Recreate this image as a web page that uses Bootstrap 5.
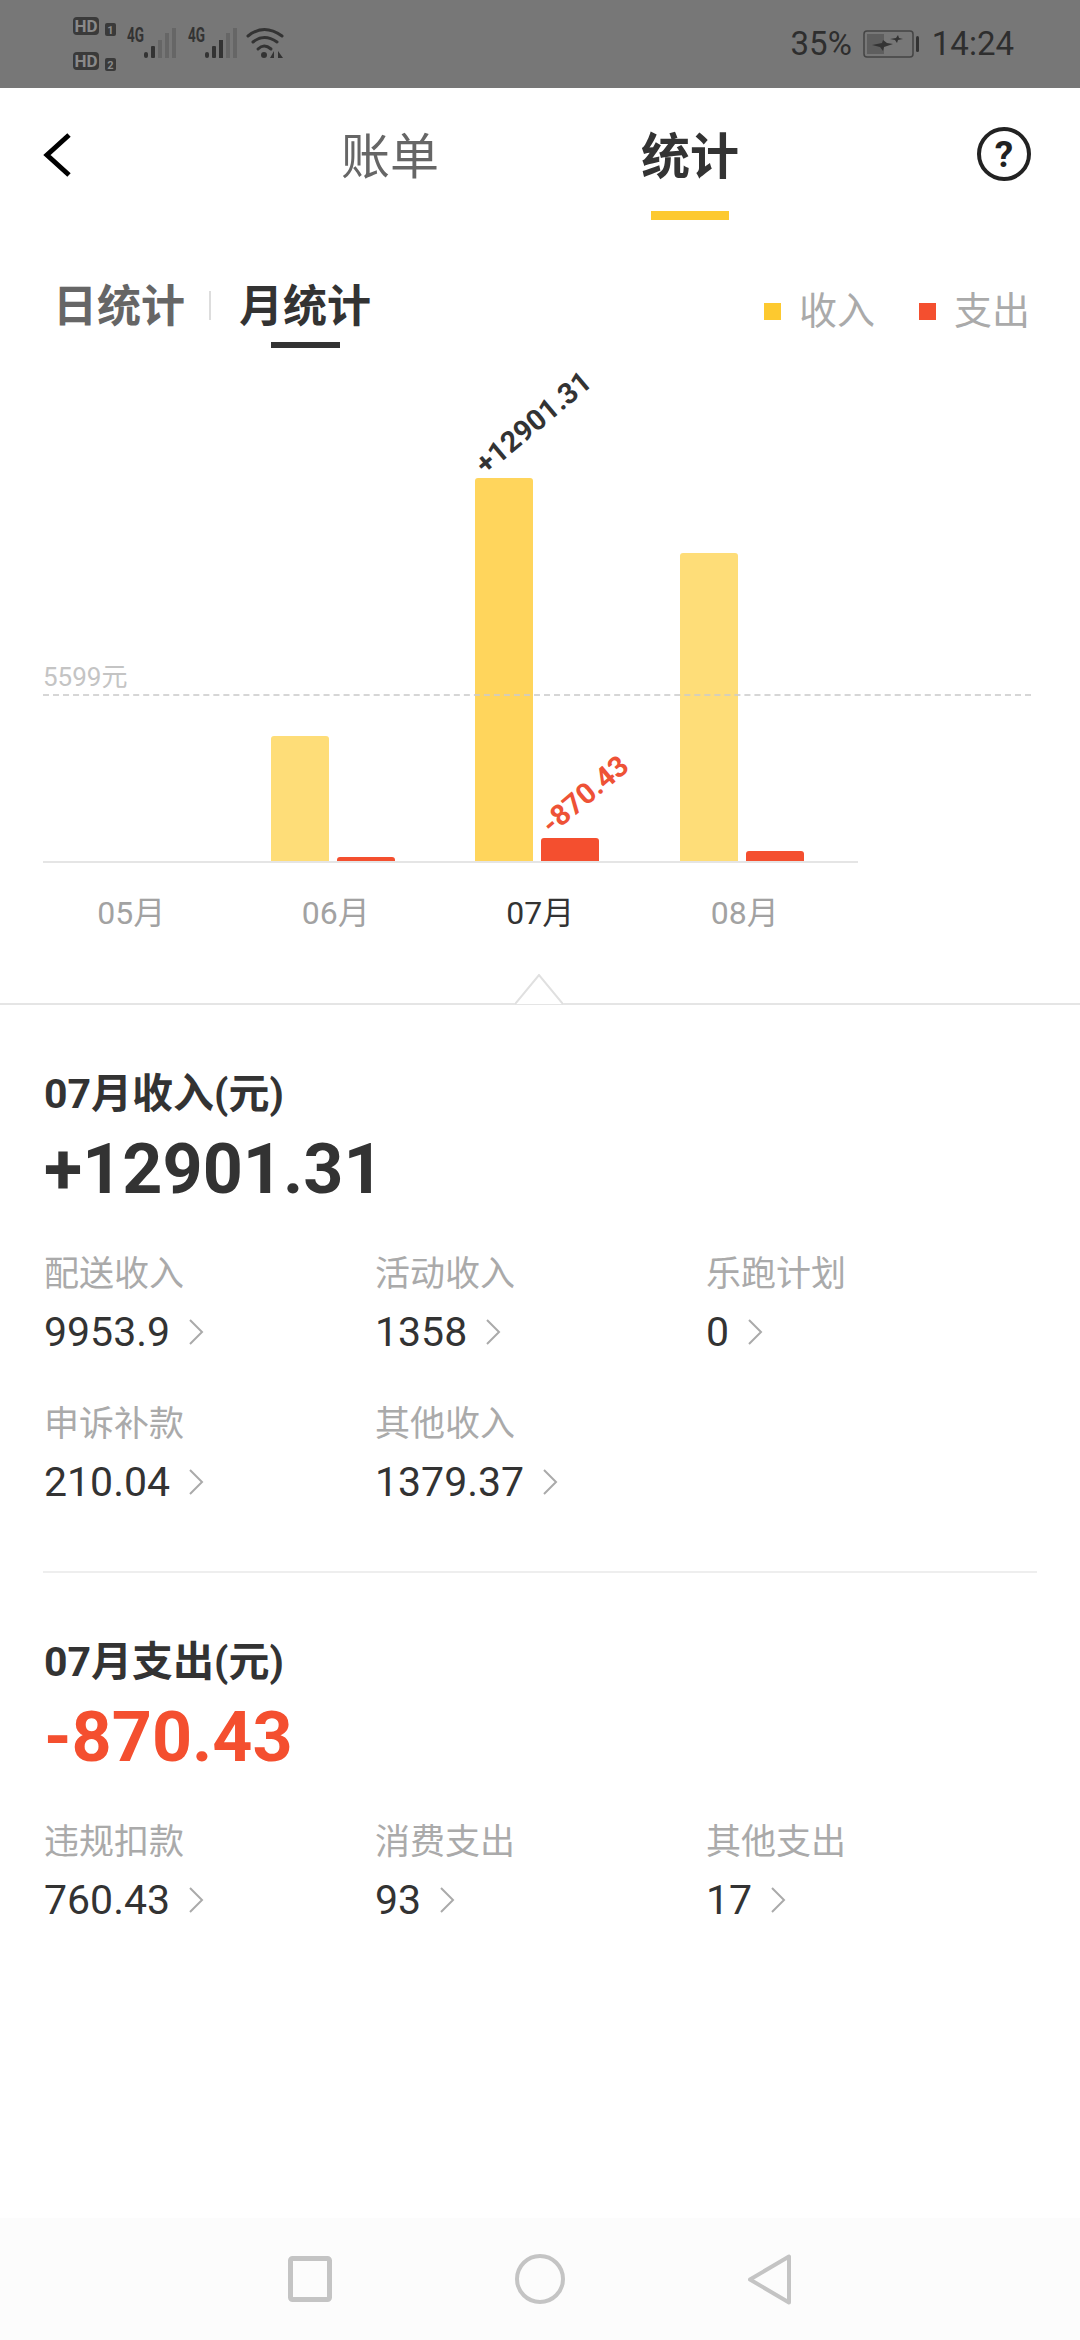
<!DOCTYPE html>
<html lang="zh">
<head>
    <meta charset="UTF-8">
    <meta name="viewport" content="width=device-width, initial-scale=1.0">
    <title>统计</title>
    <link href="https://cdn.jsdelivr.net/npm/bootstrap@5.3.2/dist/css/bootstrap.min.css" rel="stylesheet">
    <style>
        body { font-family: Roboto, "Noto Sans CJK SC", sans-serif; color: #333; background: #fff; }
        .app-page { width: 1080px; height: 2340px; overflow: hidden; }
        .status-strip { height: 88px; background: #777; padding: 0 66px 0 72px; }
        .status-text { font-size: 33px; line-height: 40px; color: #2e2e2e; }
        .status-batt { margin: 0 13px 0 11px; }

        .top-head { height: 132px; padding: 40px 49px 0 43px; }
        .head-left { width: 106px; height: 60px; margin-top: -3px; }
        .head-right { width: 100px; height: 60px; margin-top: -4px; }
        .main-tab { font-size: 49px; line-height: 60px; width: 98px; white-space: nowrap; color: #666; }
        .main-tab.is-on { color: #333; font-weight: 700; }
        .main-tab-bar { width: 78px; height: 9px; margin-top: 23px; background: transparent; }
        .is-on .main-tab-bar { background: #fdc92f; }
        .main-tabs { gap: 202px; }

        .sub-head { height: 128px; padding: 59px 50px 0 53px; }
        .sub-tab { font-size: 44px; line-height: 56px; font-weight: 700; color: #666; }
        .sub-tab.is-on { color: #333; }
        .sub-tab-bar { width: 69px; height: 6px; margin-top: 7px; background: transparent; }
        .is-on .sub-tab-bar { background: #333; }
        .sub-sep { width: 2px; height: 29px; background: #ddd; margin: 12px 28px 0 24px; }
        .key-item { font-size: 38px; line-height: 46px; color: #aaa; margin-top: 9px; }
        .key-dot { width: 17px; height: 17px; margin-right: 18px; }
        .key-gap { margin-right: 44px; }
        .tone-in { background: #fdc92f; }
        .tone-out { background: #f44f2f; }

        .plot-box { height: 515px; padding-left: 26px; }
        .plot-axis { left: 43px; width: 815px; bottom: 0; height: 2px; background: #e5e5e5; }
        .plot-avg { left: 43px; width: 988px; bottom: 167px; border-top: 2px dashed #ccc; opacity: .8; }
        .plot-avg-label { left: 43px; bottom: 172px; font-size: 26px; line-height: 28px; color: #c4c4c4; }
        .plot-cols { display: grid; grid-template-columns: repeat(4, 204.5px); height: 100%; }
        .plot-col { gap: 8px; }
        .bar-in, .bar-out { width: 58px; border-radius: 3px 3px 0 0; }
        .bar-in { background: #fedd78; }
        .bar-in.is-on { background: #ffd55c; }
        .bar-out { background: #f44f2f; }
        .bar-tag { left: 14px; bottom: 100%; margin-bottom: -1px; font-size: 29px; line-height: 30px; white-space: nowrap; transform: rotate(-40deg); transform-origin: left bottom; font-weight: 700; }
        .tag-in { color: #333; }
        .tag-out { color: #ee5236; }
        .month-row { display: grid; grid-template-columns: repeat(4, 204.5px); padding-left: 29px; height: 140px; padding-top: 30px; }
        .month-cell { font-size: 32px; line-height: 40px; text-align: center; color: #a2a2a2; }
        .month-cell.is-on { color: #333; }

        .pointer-line { height: 2px; background: #e5e5e5; }
        .pointer-mark { left: 515px; top: -29px; }

        .money-block { padding: 64px 0 0 44px; }
        .money-title { font-size: 41px; line-height: 50px; font-weight: 700; }
        .money-total { font-size: 70px; line-height: 80px; font-weight: 700; margin-top: 10px; }
        .money-total.is-out { color: #f44f2f; }
        .money-grid { display: grid; grid-template-columns: repeat(3, 331px); row-gap: 46px; margin-top: 44px; }
        .cell-name { font-size: 35px; line-height: 44px; color: #aaa; }
        .cell-value { font-size: 41px; line-height: 50px; margin-top: 10px; gap: 18px; }
        .money-rule { height: 2px; background: #eee; margin: 64px 43px 0 43px; }

        .soft-nav { height: 122px; margin-top: auto; background: #fcfcfc; gap: 183px; padding-right: 2px; }
    </style>
</head>
<body>
<div class="app-page d-flex flex-column">

    <!-- status bar -->
    <div class="status-strip d-flex justify-content-between align-items-center">
        <svg width="215" height="60" viewBox="72 15 215 60">
            <rect x="73" y="18" width="26" height="18" rx="4" fill="#3a3a3a"/>
            <text x="86" y="33" text-anchor="middle" font-family="Roboto" font-weight="700" font-size="17" fill="#8a8a8a">HD</text>
            <rect x="105" y="24" width="11" height="13" rx="2" fill="#3a3a3a"/>
            <text x="110.500" y="35" text-anchor="middle" font-family="Roboto" font-weight="700" font-size="11" fill="#8a8a8a">1</text>
            <rect x="73" y="53" width="26" height="18" rx="4" fill="#3a3a3a"/>
            <text x="86" y="68" text-anchor="middle" font-family="Roboto" font-weight="700" font-size="17" fill="#8a8a8a">HD</text>
            <rect x="105" y="59" width="11" height="13" rx="2" fill="#3a3a3a"/>
            <text x="110.500" y="70" text-anchor="middle" font-family="Roboto" font-weight="700" font-size="11" fill="#8a8a8a">2</text>

            <text x="127" y="43" font-family="Roboto" font-weight="700" font-size="21" textLength="17" lengthAdjust="spacingAndGlyphs" fill="#333">4G</text>
            <rect x="144" y="53" width="4" height="6" rx="2" fill="#333"/>
            <rect x="151" y="47" width="4" height="12" rx="1" fill="#333"/>
            <rect x="158" y="41" width="4" height="18" fill="#666"/>
            <rect x="165" y="34" width="4" height="25" fill="#666"/>
            <rect x="172" y="29" width="4" height="30" fill="#666"/>

            <text x="188" y="43" font-family="Roboto" font-weight="700" font-size="21" textLength="17" lengthAdjust="spacingAndGlyphs" fill="#333">4G</text>
            <rect x="205" y="53" width="4" height="6" rx="2" fill="#333"/>
            <rect x="212" y="47" width="4" height="12" rx="1" fill="#333"/>
            <rect x="219" y="41" width="4" height="18" fill="#333"/>
            <rect x="226" y="34" width="4" height="25" fill="#666"/>
            <rect x="233" y="29" width="4" height="30" fill="#666"/>

            <g fill="none" stroke="#333" stroke-width="3" stroke-linecap="round">
                <path d="M248 37 Q264 24 282 37"/>
                <path d="M253 43 Q264 34 277 43"/>
                <path d="M258 50 Q264 44 271 50"/>
            </g>
            <circle cx="264" cy="56" r="3" fill="#333"/>
            <path d="M274 52 V59 H270 Z M278 52 V59 H283 Z" fill="#333"/>
        </svg>
        <div class="d-flex align-items-center status-text">
            <span>35%</span>
            <svg class="status-batt" width="56" height="28" viewBox="0 0 56 28">
                <rect x="1" y="1" width="49" height="26" rx="3" fill="none" stroke="#444" stroke-width="1.500"/>
                <rect x="4" y="4" width="17" height="20" fill="#5e5e5e"/>
                <rect x="53" y="6" width="3" height="16" rx="1.500" fill="#333"/>
                <path d="M9 15 L19 13 L20 10 L24 13 L30 14 L21 17 L20 21 L17 17 Z" fill="#333"/>
                <path d="M27 9 L33 8 L35 5 L36 8 L40 9 L35 10 L34 13 L32 10 Z" fill="#333"/>
            </svg>
            <span>14:24</span>
        </div>
    </div>

    <!-- bill / stats tabs -->
    <div class="top-head d-flex justify-content-between align-items-start">
        <div class="head-left d-flex align-items-center">
            <svg width="28" height="44" viewBox="0 0 28 44">
                <polyline points="26,2 4,22 26,42" fill="none" stroke="#000" stroke-width="5"/>
            </svg>
        </div>
        <div class="main-tabs d-flex">
            <div class="main-tab d-flex flex-column align-items-center">账单<div class="main-tab-bar"></div></div>
            <div class="main-tab is-on d-flex flex-column align-items-center">统计<div class="main-tab-bar"></div></div>
        </div>
        <div class="head-right d-flex justify-content-end align-items-center">
            <svg width="54" height="54" viewBox="0 0 54 54">
                <circle cx="27" cy="27" r="25" fill="none" stroke="#222" stroke-width="4"/>
                <text x="27" y="40" text-anchor="middle" font-family="Roboto" font-weight="700" font-size="37" fill="#222">?</text>
            </svg>
        </div>
    </div>

    <!-- day / month switch and legend -->
    <div class="sub-head d-flex justify-content-between align-items-start">
        <div class="d-flex align-items-start">
            <div class="sub-tab d-flex flex-column align-items-center">日统计<div class="sub-tab-bar"></div></div>
            <div class="sub-sep"></div>
            <div class="sub-tab is-on d-flex flex-column align-items-center">月统计<div class="sub-tab-bar"></div></div>
        </div>
        <div class="d-flex align-items-center key-item">
            <span class="key-dot tone-in"></span><span class="key-gap">收入</span>
            <span class="key-dot tone-out"></span><span>支出</span>
        </div>
    </div>

    <!-- monthly chart -->
    <div class="plot-box position-relative">
        <div class="plot-cols">
            <div class="plot-col d-flex justify-content-center align-items-end"></div>
            <div class="plot-col d-flex justify-content-center align-items-end">
                <div class="bar-in" style="height: 127px"></div>
                <div class="bar-out" style="height: 6px"></div>
            </div>
            <div class="plot-col d-flex justify-content-center align-items-end">
                <div class="bar-in is-on position-relative" style="height: 385px">
                    <span class="bar-tag tag-in position-absolute">+12901.31</span>
                </div>
                <div class="bar-out position-relative" style="height: 25px">
                    <span class="bar-tag tag-out position-absolute">-870.43</span>
                </div>
            </div>
            <div class="plot-col d-flex justify-content-center align-items-end">
                <div class="bar-in" style="height: 310px"></div>
                <div class="bar-out" style="height: 12px"></div>
            </div>
        </div>
        <div class="plot-axis position-absolute"></div>
        <div class="plot-avg position-absolute"></div>
        <div class="plot-avg-label position-absolute">5599元</div>
    </div>
    <div class="month-row">
        <div class="month-cell">05月</div>
        <div class="month-cell">06月</div>
        <div class="month-cell is-on">07月</div>
        <div class="month-cell">08月</div>
    </div>

    <div class="pointer-line position-relative">
        <svg class="pointer-mark position-absolute" width="48" height="31" viewBox="0 0 48 31">
            <polyline points="0,30 24,1 48,30" fill="#fff" stroke="#e0e0e0" stroke-width="2"/>
        </svg>
    </div>

    <!-- income -->
    <div class="money-block">
        <div class="money-title">07月收入(元)</div>
        <div class="money-total">+12901.31</div>
        <div class="money-grid">
            <div>
                <div class="cell-name">配送收入</div>
                <div class="cell-value d-flex align-items-center">9953.9
                    <svg width="16" height="26" viewBox="0 0 16 26"><polyline points="2,1 14,13 2,25" fill="none" stroke="#aaa" stroke-width="2"/></svg>
                </div>
            </div>
            <div>
                <div class="cell-name">活动收入</div>
                <div class="cell-value d-flex align-items-center">1358
                    <svg width="16" height="26" viewBox="0 0 16 26"><polyline points="2,1 14,13 2,25" fill="none" stroke="#aaa" stroke-width="2"/></svg>
                </div>
            </div>
            <div>
                <div class="cell-name">乐跑计划</div>
                <div class="cell-value d-flex align-items-center">0
                    <svg width="16" height="26" viewBox="0 0 16 26"><polyline points="2,1 14,13 2,25" fill="none" stroke="#aaa" stroke-width="2"/></svg>
                </div>
            </div>
            <div>
                <div class="cell-name">申诉补款</div>
                <div class="cell-value d-flex align-items-center">210.04
                    <svg width="16" height="26" viewBox="0 0 16 26"><polyline points="2,1 14,13 2,25" fill="none" stroke="#aaa" stroke-width="2"/></svg>
                </div>
            </div>
            <div>
                <div class="cell-name">其他收入</div>
                <div class="cell-value d-flex align-items-center">1379.37
                    <svg width="16" height="26" viewBox="0 0 16 26"><polyline points="2,1 14,13 2,25" fill="none" stroke="#aaa" stroke-width="2"/></svg>
                </div>
            </div>
        </div>
    </div>

    <div class="money-rule"></div>

    <!-- expenses -->
    <div class="money-block">
        <div class="money-title">07月支出(元)</div>
        <div class="money-total is-out">-870.43</div>
        <div class="money-grid">
            <div>
                <div class="cell-name">违规扣款</div>
                <div class="cell-value d-flex align-items-center">760.43
                    <svg width="16" height="26" viewBox="0 0 16 26"><polyline points="2,1 14,13 2,25" fill="none" stroke="#aaa" stroke-width="2"/></svg>
                </div>
            </div>
            <div>
                <div class="cell-name">消费支出</div>
                <div class="cell-value d-flex align-items-center">93
                    <svg width="16" height="26" viewBox="0 0 16 26"><polyline points="2,1 14,13 2,25" fill="none" stroke="#aaa" stroke-width="2"/></svg>
                </div>
            </div>
            <div>
                <div class="cell-name">其他支出</div>
                <div class="cell-value d-flex align-items-center">17
                    <svg width="16" height="26" viewBox="0 0 16 26"><polyline points="2,1 14,13 2,25" fill="none" stroke="#aaa" stroke-width="2"/></svg>
                </div>
            </div>
        </div>
    </div>

    <!-- android nav -->
    <div class="soft-nav d-flex justify-content-center align-items-center">
        <svg width="44" height="46" viewBox="0 0 44 46"><rect x="2.500" y="2.500" width="39" height="41" rx="2" fill="none" stroke="#c4c4c4" stroke-width="5"/></svg>
        <svg width="50" height="50" viewBox="0 0 50 50"><circle cx="25" cy="25" r="23" fill="none" stroke="#c4c4c4" stroke-width="4"/></svg>
        <svg width="43" height="51" viewBox="0 0 43 51"><path d="M41 2.500 V48.500 L2 25.500 Z" fill="none" stroke="#c4c4c4" stroke-width="4" stroke-linejoin="round"/></svg>
    </div>
</div>
<script src="https://cdn.jsdelivr.net/npm/bootstrap@5.3.2/dist/js/bootstrap.bundle.min.js"></script>
</body>
</html>
